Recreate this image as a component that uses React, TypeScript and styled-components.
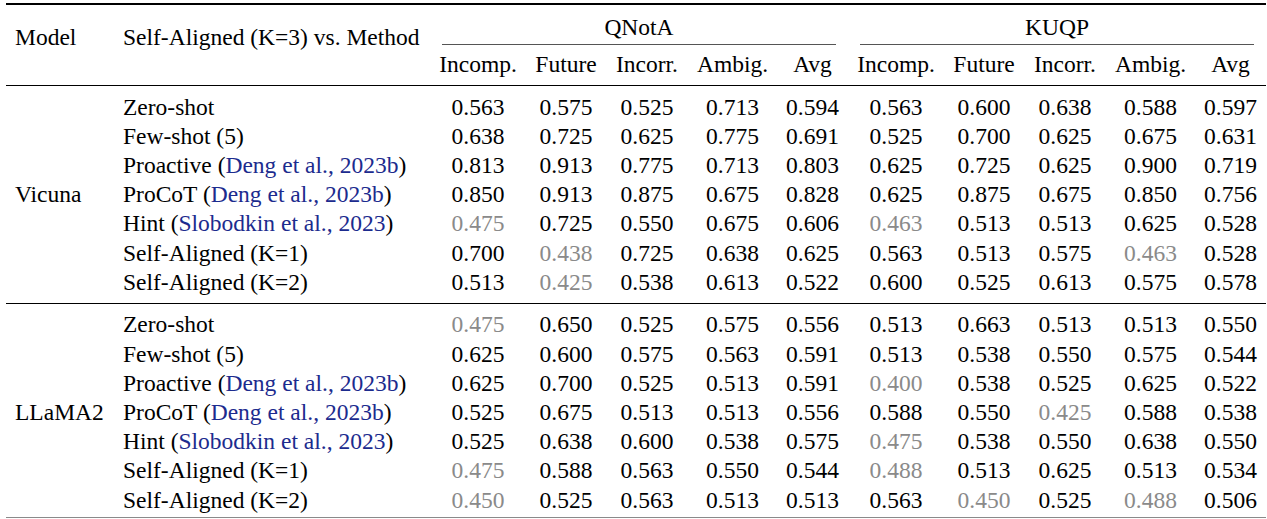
import React from 'react';
import styled, { createGlobalStyle, css } from 'styled-components';

const GlobalStyle = createGlobalStyle`
  body {
    margin: 0;
    background: #fff;
  }
`;

const Table = styled.table`
  margin: 3px 0 0 6px;
  width: 1260px;
  border-collapse: collapse;
  table-layout: fixed;
  border-top: 2px solid #000;
  border-bottom: 1px solid #8a8a8a;
  font-family: 'Liberation Serif', 'Times New Roman', serif;
  font-size: 23.5px;
  color: #000;
`;

const Col = styled.col<{ $w: number }>`
  width: ${(p) => p.$w}px;
`;

const Head = styled.thead`
  border-bottom: 1px solid #000;
`;

const SideHead = styled.th`
  padding: 0 9px 15px;
  text-align: left;
  vertical-align: middle;
  font-weight: normal;
  white-space: nowrap;
`;

const GroupHead = styled.th`
  padding: 0;
  font-weight: normal;
  vertical-align: top;
`;

const GroupTitle = styled.div`
  margin: 0 12px;
  padding: 8px 0 2px;
  line-height: 29px;
  text-align: center;
  border-bottom: 1px solid #555;
`;

const MetricHead = styled.th`
  padding: 5px 0 6px;
  line-height: 29.2px;
  font-weight: normal;
  text-align: center;
  white-space: nowrap;
`;

const Section = styled.tbody<{ $divided?: boolean }>`
  ${(p) =>
    p.$divided &&
    css`
      border-top: 1px solid #000;
    `}
`;

const Row = styled.tr<{ $first?: boolean; $last?: boolean; $tail?: number }>`
  & > td {
    ${(p) => p.$first && 'padding-top: 6.4px;'}
    ${(p) => p.$last && `padding-bottom: ${p.$tail}px;`}
  }
`;

const ModelCell = styled.td<{ $tail: number }>`
  && {
    padding: 6.4px 9px ${(p) => p.$tail}px;
  }
  vertical-align: middle;
  white-space: nowrap;
`;

const MethodCell = styled.td`
  padding: 0 9px;
  line-height: 29.2px;
  text-align: left;
  white-space: nowrap;
`;

const Cite = styled.span`
  color: #1c2b8e;
`;

const Score = styled.td<{ $muted: boolean }>`
  padding: 0;
  line-height: 29.2px;
  text-align: center;
  color: ${(p) => (p.$muted ? '#8a8a8a' : '#000')};
`;

const metrics = ['Incomp.', 'Future', 'Incorr.', 'Ambig.', 'Avg'];
const widths = [108, 316, 96, 80, 82, 89, 71, 96, 80, 82, 89, 71];

const methods: [string, string?][] = [
  ['Zero-shot'],
  ['Few-shot (5)'],
  ['Proactive', 'Deng et al., 2023b'],
  ['ProCoT', 'Deng et al., 2023b'],
  ['Hint', 'Slobodkin et al., 2023'],
  ['Self-Aligned (K=1)'],
  ['Self-Aligned (K=2)'],
];

const groups = [
  {
    model: 'Vicuna',
    tail: 6,
    scores: [
      '0.563 0.575 0.525 0.713 0.594 0.563 0.600 0.638 0.588 0.597',
      '0.638 0.725 0.625 0.775 0.691 0.525 0.700 0.625 0.675 0.631',
      '0.813 0.913 0.775 0.713 0.803 0.625 0.725 0.625 0.900 0.719',
      '0.850 0.913 0.875 0.675 0.828 0.625 0.875 0.675 0.850 0.756',
      '0.475 0.725 0.550 0.675 0.606 0.463 0.513 0.513 0.625 0.528',
      '0.700 0.438 0.725 0.638 0.625 0.563 0.513 0.575 0.463 0.528',
      '0.513 0.425 0.538 0.613 0.522 0.600 0.525 0.613 0.575 0.578',
    ],
  },
  {
    model: 'LLaMA2',
    tail: 2,
    scores: [
      '0.475 0.650 0.525 0.575 0.556 0.513 0.663 0.513 0.513 0.550',
      '0.625 0.600 0.575 0.563 0.591 0.513 0.538 0.550 0.575 0.544',
      '0.625 0.700 0.525 0.513 0.591 0.400 0.538 0.525 0.625 0.522',
      '0.525 0.675 0.513 0.513 0.556 0.588 0.550 0.425 0.588 0.538',
      '0.525 0.638 0.600 0.538 0.575 0.475 0.538 0.550 0.638 0.550',
      '0.475 0.588 0.563 0.550 0.544 0.488 0.513 0.625 0.513 0.534',
      '0.450 0.525 0.563 0.513 0.513 0.563 0.450 0.525 0.488 0.506',
    ],
  },
];

function App() {
  return (
    <>
      <GlobalStyle />
      <Table>
        <colgroup>
          {widths.map((w, i) => (
            <Col key={i} $w={w} />
          ))}
        </colgroup>
        <Head>
          <tr>
            <SideHead rowSpan={2}>Model</SideHead>
            <SideHead rowSpan={2}>Self-Aligned (K=3) vs. Method</SideHead>
            <GroupHead colSpan={5}>
              <GroupTitle>QNotA</GroupTitle>
            </GroupHead>
            <GroupHead colSpan={5}>
              <GroupTitle>KUQP</GroupTitle>
            </GroupHead>
          </tr>
          <tr>
            {[...metrics, ...metrics].map((m, i) => (
              <MetricHead key={i}>{m}</MetricHead>
            ))}
          </tr>
        </Head>
        {groups.map((g, gi) => (
          <Section key={g.model} $divided={gi > 0}>
            {g.scores.map((line, ri) => {
              const [name, cite] = methods[ri];
              return (
                <Row key={ri} $first={ri === 0} $last={ri === g.scores.length - 1} $tail={g.tail}>
                  {ri === 0 && (
                    <ModelCell rowSpan={g.scores.length} $tail={g.tail}>
                      {g.model}
                    </ModelCell>
                  )}
                  <MethodCell>
                    {name}
                    {cite && (
                      <>
                        {' ('}
                        <Cite>{cite}</Cite>
                        {')'}
                      </>
                    )}
                  </MethodCell>
                  {line.split(' ').map((v, vi) => (
                    <Score key={vi} $muted={parseFloat(v) < 0.5}>
                      {v}
                    </Score>
                  ))}
                </Row>
              );
            })}
          </Section>
        ))}
      </Table>
    </>
  );
}

export default App;
